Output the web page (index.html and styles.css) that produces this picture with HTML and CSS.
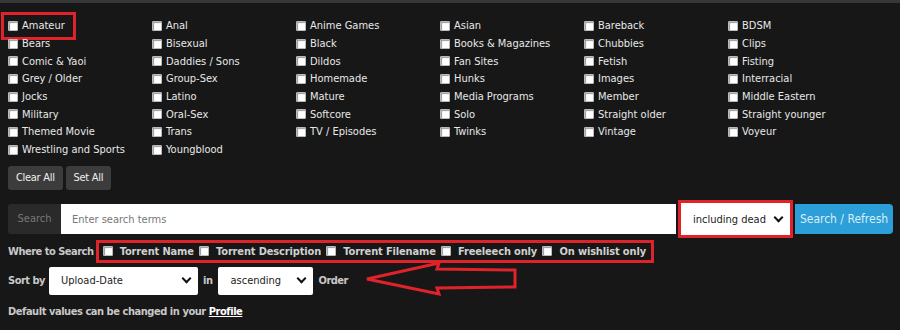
FILE: index.html
```html
<!DOCTYPE html>
<html lang="en">
<head>
  <meta charset="UTF-8">
  <title>Browse Torrents</title>
  <link rel="stylesheet" href="styles.css">
</head>
<body>
  <div class="topbar"></div>
  <div class="page">
    <div class="cats">
      <label class="cat marked"><input type="checkbox"> Amateur</label>
      <label class="cat"><input type="checkbox"> Anal</label>
      <label class="cat"><input type="checkbox"> Anime Games</label>
      <label class="cat"><input type="checkbox"> Asian</label>
      <label class="cat"><input type="checkbox"> Bareback</label>
      <label class="cat"><input type="checkbox"> BDSM</label>
      <label class="cat"><input type="checkbox"> Bears</label>
      <label class="cat"><input type="checkbox"> Bisexual</label>
      <label class="cat"><input type="checkbox"> Black</label>
      <label class="cat"><input type="checkbox"> Books &amp; Magazines</label>
      <label class="cat"><input type="checkbox"> Chubbies</label>
      <label class="cat"><input type="checkbox"> Clips</label>
      <label class="cat"><input type="checkbox"> Comic &amp; Yaoi</label>
      <label class="cat"><input type="checkbox"> Daddies / Sons</label>
      <label class="cat"><input type="checkbox"> Dildos</label>
      <label class="cat"><input type="checkbox"> Fan Sites</label>
      <label class="cat"><input type="checkbox"> Fetish</label>
      <label class="cat"><input type="checkbox"> Fisting</label>
      <label class="cat"><input type="checkbox"> Grey / Older</label>
      <label class="cat"><input type="checkbox"> Group-Sex</label>
      <label class="cat"><input type="checkbox"> Homemade</label>
      <label class="cat"><input type="checkbox"> Hunks</label>
      <label class="cat"><input type="checkbox"> Images</label>
      <label class="cat"><input type="checkbox"> Interracial</label>
      <label class="cat"><input type="checkbox"> Jocks</label>
      <label class="cat"><input type="checkbox"> Latino</label>
      <label class="cat"><input type="checkbox"> Mature</label>
      <label class="cat"><input type="checkbox"> Media Programs</label>
      <label class="cat"><input type="checkbox"> Member</label>
      <label class="cat"><input type="checkbox"> Middle Eastern</label>
      <label class="cat"><input type="checkbox"> Military</label>
      <label class="cat"><input type="checkbox"> Oral-Sex</label>
      <label class="cat"><input type="checkbox"> Softcore</label>
      <label class="cat"><input type="checkbox"> Solo</label>
      <label class="cat"><input type="checkbox"> Straight older</label>
      <label class="cat"><input type="checkbox"> Straight younger</label>
      <label class="cat"><input type="checkbox"> Themed Movie</label>
      <label class="cat"><input type="checkbox"> Trans</label>
      <label class="cat"><input type="checkbox"> TV / Episodes</label>
      <label class="cat"><input type="checkbox"> Twinks</label>
      <label class="cat"><input type="checkbox"> Vintage</label>
      <label class="cat"><input type="checkbox"> Voyeur</label>
      <label class="cat"><input type="checkbox"> Wrestling and Sports</label>
      <label class="cat"><input type="checkbox"> Youngblood</label>
    </div>

    <div class="btns">
      <button class="btn">Clear All</button>
      <button class="btn">Set All</button>
    </div>

    <div class="search-row">
      <span class="addon">Search</span>
      <input class="terms" type="text" placeholder="Enter search terms">
      <span class="sel-mark">
        <span class="select dead">including dead <span class="caret"></span></span>
      </span>
      <button class="go">Search / Refresh</button>
    </div>

    <div class="where-row">
      <span class="lbl">Where to Search</span>
      <span class="where-box">
        <label><input type="checkbox"> Torrent Name</label>
        <label><input type="checkbox"> Torrent Description</label>
        <label><input type="checkbox"> Torrent Filename</label>
        <label><input type="checkbox"> Freeleech only</label>
        <label><input type="checkbox"> On wishlist only</label>
      </span>
    </div>

    <div class="sort-row">
      <span class="lbl">Sort by</span>
      <span class="select sort">Upload-Date <span class="caret"></span></span>
      <span class="lbl">in</span>
      <span class="select order">ascending <span class="caret"></span></span>
      <span class="lbl">Order</span>
    </div>

    <div class="note">Default values can be changed in your <a href="#">Profile</a></div>
  </div>

  <svg class="arrow" width="160" height="40" viewBox="0 0 160 40">
    <polygon points="6,21 78,5 76,11 154,12 154,29 76,30 78,36" fill="none" stroke="#e0222b" stroke-width="3" stroke-linejoin="miter"/>
  </svg>
</body>
</html>
```

FILE: styles.css
```css
body { margin: 0; background: #171717; color: #e8e8e8; font-family: "DejaVu Sans Condensed", "DejaVu Sans", sans-serif; font-size: 11px; position: relative; }
.topbar { height: 3px; background: #383838; }
.page { padding: 14px 7px 0 8px; }

input[type="checkbox"] { appearance: none; -webkit-appearance: none; box-sizing: border-box; width: 10px; height: 10px; margin: 0 4px 0 0; background: #fff; border: 1px solid #bbb; border-radius: 1px; box-shadow: inset 1px 1px 1px #999; vertical-align: -1px; }

.cats { display: grid; grid-template-columns: repeat(6, 144px); grid-auto-rows: 17.7px; }
.cat { display: flex; align-items: center; white-space: nowrap; }
.cat.marked { outline: 3px solid #e0222b; outline-offset: 2px; width: fit-content; padding: 0 6px 0 2px; margin-left: -2px; }

.btns { display: flex; gap: 3px; margin-top: 7px; }
.btn { background: #3c3c3c; color: #eee; border: 0; border-radius: 3px; font: inherit; letter-spacing: -0.3px; height: 24px; padding: 0 8px; }

.search-row { display: flex; align-items: center; margin-top: 10px; height: 39px; }
.addon { background: #2a2a2a; color: #777; height: 30px; line-height: 30px; width: 53px; text-align: center; border-radius: 3px 0 0 3px; }
.terms { flex: 1; height: 30px; box-sizing: border-box; border: 0; padding: 0 11px; font: inherit; }
.terms::placeholder { color: #777; }
.sel-mark { border: 3px solid #e0222b; padding: 2px 0; margin: 0 2px 0 2px; background: #fff; }
.select { display: inline-flex; align-items: center; justify-content: space-between; background: #fff; color: #222; height: 28px; box-sizing: border-box; padding: 0 8px 0 12px; font-size: 11px; border-radius: 2px; }
.select.dead { width: 109px; padding-left: 12px; border-radius: 0; }
.caret { width: 5px; height: 5px; border-right: 2px solid #111; border-bottom: 2px solid #111; transform: rotate(45deg); margin-top: -4px; }
.go { background: #2c9ed8; color: #d8eef9; border: 0; font: inherit; font-size: 12px; white-space: nowrap; height: 30px; width: 98px; padding: 0; border-radius: 0 4px 4px 0; }

.lbl { font-weight: bold; color: #c8c8c8; letter-spacing: -0.5px; }
.where-row { display: flex; align-items: center; height: 26px; }
.where-box { display: flex; align-items: center; border: 3px solid #e0222b; padding: 2px 5px 2px 4px; margin-left: 2px; font-weight: bold; color: #d0d0d0; gap: 5px; letter-spacing: -0.15px; }
.where-box input { margin-right: 4px; }

.sort-row { display: flex; align-items: center; gap: 5px; margin-top: 2px; }
.select.sort { width: 149px; margin-left: -1px; }
.select.order { width: 95px; margin-left: 1px; }

.note { margin-top: 10px; font-weight: bold; color: #c8c8c8; letter-spacing: -0.45px; }
.note a { color: #fff; }

.arrow { position: absolute; left: 361px; top: 258px; }
```
